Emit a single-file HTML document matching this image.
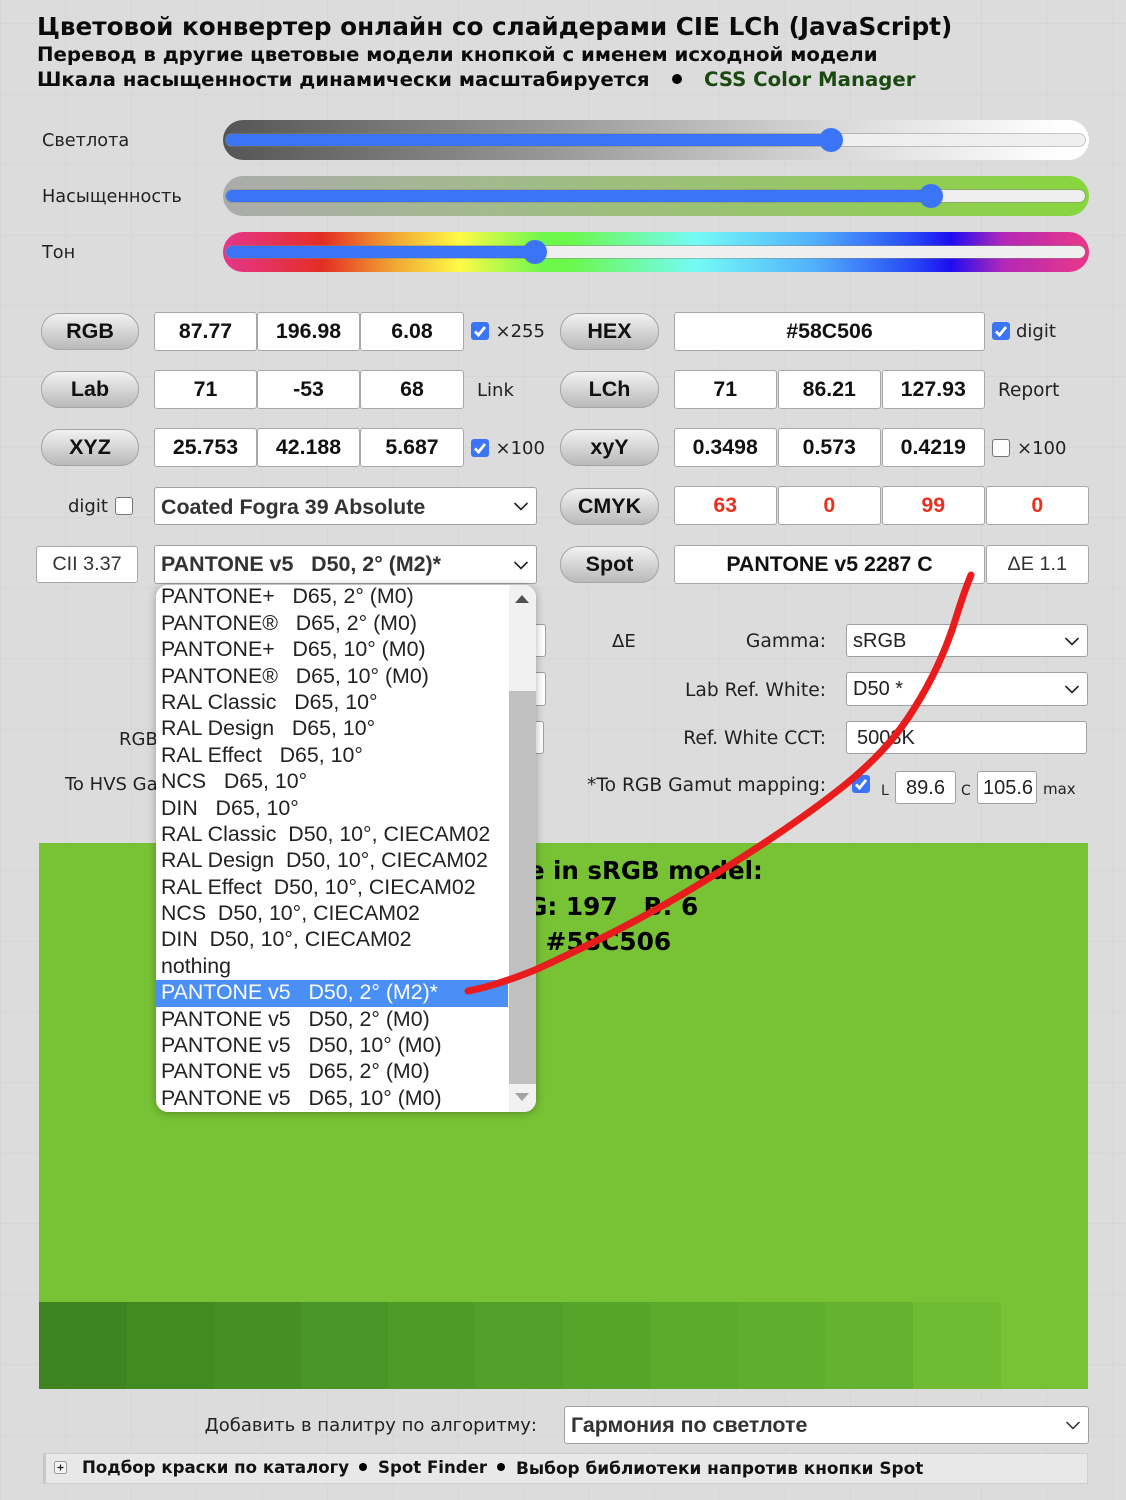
<!DOCTYPE html>
<html><head><meta charset="utf-8">
<style>
html,body{margin:0;padding:0}
body{position:relative;width:1126px;height:1500px;overflow:hidden;background-color:#dcdcdc;
background-image:linear-gradient(to right,#d6d6d6 1px,transparent 1px),linear-gradient(to bottom,#d6d6d6 1px,transparent 1px);
background-size:65.4px 70.6px;background-position:0 23px;
font-family:"DejaVu Sans","Liberation Sans",sans-serif;color:#222}
.a{position:absolute;white-space:nowrap}
.lb{position:absolute;white-space:nowrap;font-size:18px;color:#222;line-height:24px}
.l2{font-size:18.7px}
.l3{font-size:17.7px}
.r{text-align:right}
.tr{position:absolute;left:223px;width:866px;height:40px;border-radius:20px}
.rail{position:absolute;left:226px;width:859px;height:12px;border-radius:6px;background:#efefef;box-shadow:0 0 0 1px rgba(130,130,130,.45)}
.fill{position:absolute;left:226px;height:12px;border-radius:6px 0 0 6px;background:#3b74f4}
.th{position:absolute;width:24px;height:24px;border-radius:12px;background:#3b74f4}
.btn{position:absolute;width:97px;height:35px;border:1px solid #a5a5a5;border-radius:18px;background:linear-gradient(#f2f2f2,#b9b9b9);font:bold 21.5px/35px "Liberation Sans",sans-serif;text-align:center;color:#111}
.i{position:absolute;box-sizing:border-box;height:39px;background:#fff;border:1px solid #a8a8a8;border-radius:3px;font:bold 21.3px/37px "Liberation Sans",sans-serif;text-align:center;color:#111}
.n{font-weight:normal;color:#333}
.red{color:#e8321f}
.cb{position:absolute;box-sizing:border-box;width:18px;height:18px;border-radius:3px;background:#3b74f4}
.un{background:#fff;border:1px solid #767676}
.s{position:absolute;box-sizing:border-box;background:#fff;border:1px solid #a0a0a0;border-radius:3px;font:bold 21.4px/37px "Liberation Sans",sans-serif;color:#333;padding-left:6px;white-space:pre}
.s svg,.s2 svg{position:absolute;right:7px;top:50%;margin-top:-5px}
.s2{position:absolute;box-sizing:border-box;left:846px;width:242px;height:34px;background:#fff;border:1px solid #a0a0a0;border-radius:3px;font:20px/32px "Liberation Sans",sans-serif;color:#222;padding-left:6px}
.dd{position:absolute;left:156px;top:585px;width:380px;height:527px;box-sizing:border-box;background:#fff;border-radius:12px;box-shadow:0 1px 9px rgba(0,0,0,.3);overflow:hidden;font:21.35px/25.2px "Liberation Sans",sans-serif;color:#222}
.dd div.o{height:26.4px;padding-left:5px;white-space:pre}
.sel{background:#4a8ff5;color:#fff;width:352px;box-sizing:border-box}
.h1{font-weight:bold;color:#0b0b0b}
.cell{position:absolute;top:1302px;height:87px}
.dot{position:absolute;border-radius:50%;background:#000}
</style></head><body>

<div class="a h1" style="left:37px;top:9px;font-size:24.7px;line-height:36px">Цветовой конвертер онлайн со слайдерами CIE LCh (JavaScript)</div>
<div class="a h1" style="left:37px;top:41px;font-size:19.75px;line-height:27px">Перевод в другие цветовые модели кнопкой с именем исходной модели</div>
<div class="a h1" style="left:37px;top:66px;font-size:19.75px;line-height:27px">Шкала насыщенности динамически масштабируется</div>
<div class="dot" style="left:672px;top:74px;width:10px;height:10px"></div>
<div class="a h1" style="left:704px;top:66px;font-size:19.72px;line-height:27px;color:#1a4a10">CSS Color Manager</div>

<div class="lb l3" style="left:42px;top:129px">Светлота</div>
<div class="lb l3" style="left:42px;top:185px">Насыщенность</div>
<div class="lb l3" style="left:42px;top:241px">Тон</div>

<div class="tr" style="top:120px;background:linear-gradient(to right,#555,#9a9a9a 39%,#c4c4c4 60%,#e0e0e0 75%,#fff 97%)"></div>
<div class="tr" style="top:176px;background:linear-gradient(to right,#ababab,#a3b98e 30%,#97c569 65%,#88d63e)"></div>
<div class="tr" style="top:232px;background:linear-gradient(to right,#e6368c,#e32e24 11.5%,#f3a934 20%,#fdfb47 27.4%,#6bf84b 37%,#6bf84b 40%,#74fbf6 54.6%,#52b2fb 68%,#2545f5 80%,#1e0df0 84%,#b128b8 90%,#e6368c 99%)"></div>

<div class="rail" style="top:134px"></div><div class="fill" style="top:134px;width:605px"></div><div class="th" style="left:819px;top:128px"></div>
<div class="rail" style="top:190px"></div><div class="fill" style="top:190px;width:705px"></div><div class="th" style="left:919px;top:184px"></div>
<div class="rail" style="top:246px"></div><div class="fill" style="top:246px;width:309px"></div><div class="th" style="left:523px;top:240px"></div>

<div class="btn" style="left:41px;top:313px;width:96px">RGB</div>
<div class="btn" style="left:41px;top:371px;width:96px">Lab</div>
<div class="btn" style="left:41px;top:429px;width:96px">XYZ</div>
<div class="btn" style="left:560px;top:313px">HEX</div>
<div class="btn" style="left:560px;top:371px">LCh</div>
<div class="btn" style="left:560px;top:429px">xyY</div>
<div class="btn" style="left:560px;top:488px">CMYK</div>
<div class="btn" style="left:560px;top:546px">Spot</div>

<div class="i" style="left:154px;top:312px;width:103px">87.77</div>
<div class="i" style="left:257px;top:312px;width:103px">196.98</div>
<div class="i" style="left:360px;top:312px;width:104px">6.08</div>
<div class="i" style="left:154px;top:370px;width:103px">71</div>
<div class="i" style="left:257px;top:370px;width:103px">-53</div>
<div class="i" style="left:360px;top:370px;width:104px">68</div>
<div class="i" style="left:154px;top:428px;width:103px">25.753</div>
<div class="i" style="left:257px;top:428px;width:103px">42.188</div>
<div class="i" style="left:360px;top:428px;width:104px">5.687</div>

<div class="i" style="left:674px;top:312px;width:311px">#58C506</div>
<div class="i" style="left:674px;top:370px;width:102.5px">71</div>
<div class="i" style="left:778px;top:370px;width:102.5px">86.21</div>
<div class="i" style="left:882px;top:370px;width:102.5px">127.93</div>
<div class="i" style="left:674px;top:428px;width:102.5px">0.3498</div>
<div class="i" style="left:778px;top:428px;width:102.5px">0.573</div>
<div class="i" style="left:882px;top:428px;width:102.5px">0.4219</div>
<div class="i red" style="left:674px;top:486px;width:102.5px">63</div>
<div class="i red" style="left:778px;top:486px;width:102.5px">0</div>
<div class="i red" style="left:882px;top:486px;width:102.5px">99</div>
<div class="i red" style="left:986px;top:486px;width:102.5px">0</div>
<div class="i" style="left:674px;top:545px;width:311px">PANTONE v5 2287 C</div>
<div class="i n" style="left:986px;top:545px;width:102.5px;font-size:19.8px">ΔE 1.1</div>
<div class="i n" style="left:36px;top:546px;width:102px;height:37px;line-height:35px;font-size:19.8px">CII 3.37</div>

<div class="s" style="left:154px;top:487px;width:383px;height:38px;line-height:38px">Coated Fogra 39 Absolute<svg width="16" height="10"><path d="M1.5 2L8 8.5 14.5 2" fill="none" stroke="#222" stroke-width="1.6"/></svg></div>
<div class="s" style="left:154px;top:545px;width:383px;height:39px">PANTONE v5   D50, 2° (M2)*<svg width="16" height="10"><path d="M1.5 2L8 8.5 14.5 2" fill="none" stroke="#222" stroke-width="1.6"/></svg></div>

<svg class="cb" style="left:471px;top:322px" width="18" height="18"><path d="M4 9.5l3.5 3.5L14 5" fill="none" stroke="#fff" stroke-width="2.8"/></svg>
<svg class="cb" style="left:471px;top:439px" width="18" height="18"><path d="M4 9.5l3.5 3.5L14 5" fill="none" stroke="#fff" stroke-width="2.8"/></svg>
<svg class="cb" style="left:992px;top:322px" width="18" height="18"><path d="M4 9.5l3.5 3.5L14 5" fill="none" stroke="#fff" stroke-width="2.8"/></svg>
<svg class="cb" style="left:852px;top:775px" width="18" height="18"><path d="M4 9.5l3.5 3.5L14 5" fill="none" stroke="#fff" stroke-width="2.8"/></svg>
<div class="cb un" style="left:992px;top:439px"></div>
<div class="cb un" style="left:115px;top:497px"></div>

<div class="lb" style="left:495.5px;top:320px">×255</div>
<div class="lb" style="left:477px;top:379px">Link</div>
<div class="lb" style="left:495.5px;top:437px">×100</div>
<div class="lb" style="left:1016px;top:320px">digit</div>
<div class="lb" style="left:998px;top:379px;font-size:18.5px">Report</div>
<div class="lb" style="left:1017px;top:437px">×100</div>
<div class="lb" style="left:68px;top:495px">digit</div>

<div class="s2" style="left:500px;top:624px;width:46px;height:33px"></div>
<div class="s2" style="left:500px;top:672px;width:46px;height:34px"></div>
<div class="s2" style="left:500px;top:721px;width:44px;height:33px"></div>
<div class="lb" style="left:119px;top:728px">RGB</div>
<div class="lb" style="left:65px;top:773px">To HVS Gamut</div>

<div class="lb" style="left:612px;top:630px">ΔE</div>
<div class="lb l2 r" style="right:300px;top:630px">Gamma:</div>
<div class="lb l2 r" style="right:300px;top:679px">Lab Ref. White:</div>
<div class="lb l2 r" style="right:300px;top:727px">Ref. White CCT:</div>
<div class="lb l2 r" style="right:300px;top:773.5px">*To RGB Gamut mapping:</div>

<div class="s2" style="top:624px;height:33px">sRGB<svg width="16" height="10"><path d="M1.5 2L8 8.5 14.5 2" fill="none" stroke="#222" stroke-width="1.6"/></svg></div>
<div class="s2" style="top:672px;height:34px">D50 *<svg width="16" height="10"><path d="M1.5 2L8 8.5 14.5 2" fill="none" stroke="#222" stroke-width="1.6"/></svg></div>
<div class="s2" style="top:721px;width:241px;height:33px;padding-left:10px">5003K</div>
<div class="lb" style="left:881px;top:779px;font-size:14px">L</div>
<div class="s2" style="left:895px;top:771px;width:61px;height:33px;text-align:center;padding:0">89.6</div>
<div class="lb" style="left:961px;top:779px;font-size:14px">C</div>
<div class="s2" style="left:977px;top:771px;width:60px;height:33px;padding-left:5px;overflow:hidden">105.6</div>
<div class="lb" style="left:1043px;top:777px;font-size:15px">max</div>

<div class="a" style="left:39px;top:843px;width:1049px;height:546px;background:#78c236"></div>
<div class="cell" style="left:39px;width:88px;background:#3e8420"></div>
<div class="cell" style="left:127px;width:87px;background:#428a22"></div>
<div class="cell" style="left:214px;width:87px;background:#458f24"></div>
<div class="cell" style="left:301px;width:87px;background:#499526"></div>
<div class="cell" style="left:388px;width:87px;background:#4e9b27"></div>
<div class="cell" style="left:475px;width:88px;background:#52a029"></div>
<div class="cell" style="left:563px;width:87px;background:#56a52b"></div>
<div class="cell" style="left:650px;width:88px;background:#5aaa2c"></div>
<div class="cell" style="left:738px;width:87px;background:#5fae2e"></div>
<div class="cell" style="left:825px;width:88px;background:#64b230"></div>
<div class="cell" style="left:913px;width:88px;background:#6fbb32"></div>

<div class="a h1" style="left:553px;top:854px;font-size:24.5px;line-height:34px;color:#000">in sRGB model:</div>
<div class="a h1" style="left:528px;top:854px;font-size:24.5px;line-height:34px;color:#000">e</div>
<div class="a h1" style="left:527px;top:889.5px;font-size:24.8px;line-height:34px;color:#000;white-space:pre">G: 197   B: 6</div>
<div class="a h1" style="left:545.5px;top:925px;font-size:24.9px;line-height:34px;color:#000">#58C506</div>

<div class="dd">
<div class="o" style="margin-top:-0.6px">PANTONE+   D65, 2° (M0)</div>
<div class="o">PANTONE®   D65, 2° (M0)</div>
<div class="o">PANTONE+   D65, 10° (M0)</div>
<div class="o">PANTONE®   D65, 10° (M0)</div>
<div class="o">RAL Classic   D65, 10°</div>
<div class="o">RAL Design   D65, 10°</div>
<div class="o">RAL Effect   D65, 10°</div>
<div class="o">NCS   D65, 10°</div>
<div class="o">DIN   D65, 10°</div>
<div class="o">RAL Classic  D50, 10°, CIECAM02</div>
<div class="o">RAL Design  D50, 10°, CIECAM02</div>
<div class="o">RAL Effect  D50, 10°, CIECAM02</div>
<div class="o">NCS  D50, 10°, CIECAM02</div>
<div class="o">DIN  D50, 10°, CIECAM02</div>
<div class="o">nothing</div>
<div class="o sel">PANTONE v5   D50, 2° (M2)*</div>
<div class="o">PANTONE v5   D50, 2° (M0)</div>
<div class="o">PANTONE v5   D50, 10° (M0)</div>
<div class="o">PANTONE v5   D65, 2° (M0)</div>
<div class="o">PANTONE v5   D65, 10° (M0)</div>
<div class="a" style="left:353px;top:0;width:27px;height:527px;background:#f1f1f1"></div>
<div class="a" style="left:353px;top:106px;width:27px;height:393px;background:#c0c0c0"></div>
<svg class="a" style="left:352px;top:0" width="28" height="28"><path d="M7 18L14 10 21 18Z" fill="#505050"/></svg>
<svg class="a" style="left:352px;top:499px" width="28" height="28"><path d="M7 9L14 17 21 9Z" fill="#a3a3a3"/></svg>
</div>

<svg class="a" style="left:0;top:0;pointer-events:none" width="1126" height="1500"><path d="M971 575C962 597 958 612 953 627C943 657 928 688 908 718C888 748 862 772 836 792C800 820 755 850 706 880C650 915 590 945 535 970C515 978 490 987 468 991" fill="none" stroke="#e81c1c" stroke-width="7" stroke-linecap="round"/></svg>

<div class="lb r" style="right:589px;top:1414px">Добавить в палитру по алгоритму:</div>
<div class="s" style="left:564px;top:1406px;width:525px;height:38px;color:#333">Гармония по светлоте<svg width="16" height="10"><path d="M1.5 2L8 8.5 14.5 2" fill="none" stroke="#222" stroke-width="1.4"/></svg></div>

<div class="a" style="left:43px;top:1453px;width:1045px;height:31px;box-sizing:border-box;background:#e8e8e8;border:1px solid #cfcfcf;border-left:3px solid #c8c8c8"></div>
<svg class="a" style="left:54px;top:1461px" width="14" height="14"><rect x=".5" y=".5" width="12" height="12" rx="2" fill="#f4f4f4" stroke="#999"/><path d="M3.5 6.5h6M6.5 3.5v6" stroke="#222" stroke-width="1.2"/></svg>
<div class="a h1" style="left:82px;top:1456px;font-size:16.6px;line-height:24px;color:#111">Подбор краски по каталогу</div>
<div class="dot" style="left:359px;top:1463px;width:8px;height:8px"></div>
<div class="a h1" style="left:378px;top:1456px;font-size:16.6px;line-height:24px;color:#111">Spot Finder</div>
<div class="dot" style="left:497px;top:1463px;width:8px;height:8px"></div>
<div class="a h1" style="left:516px;top:1456px;font-size:16.9px;line-height:24px;color:#111">Выбор библиотеки напротив кнопки Spot</div>
</body></html>
